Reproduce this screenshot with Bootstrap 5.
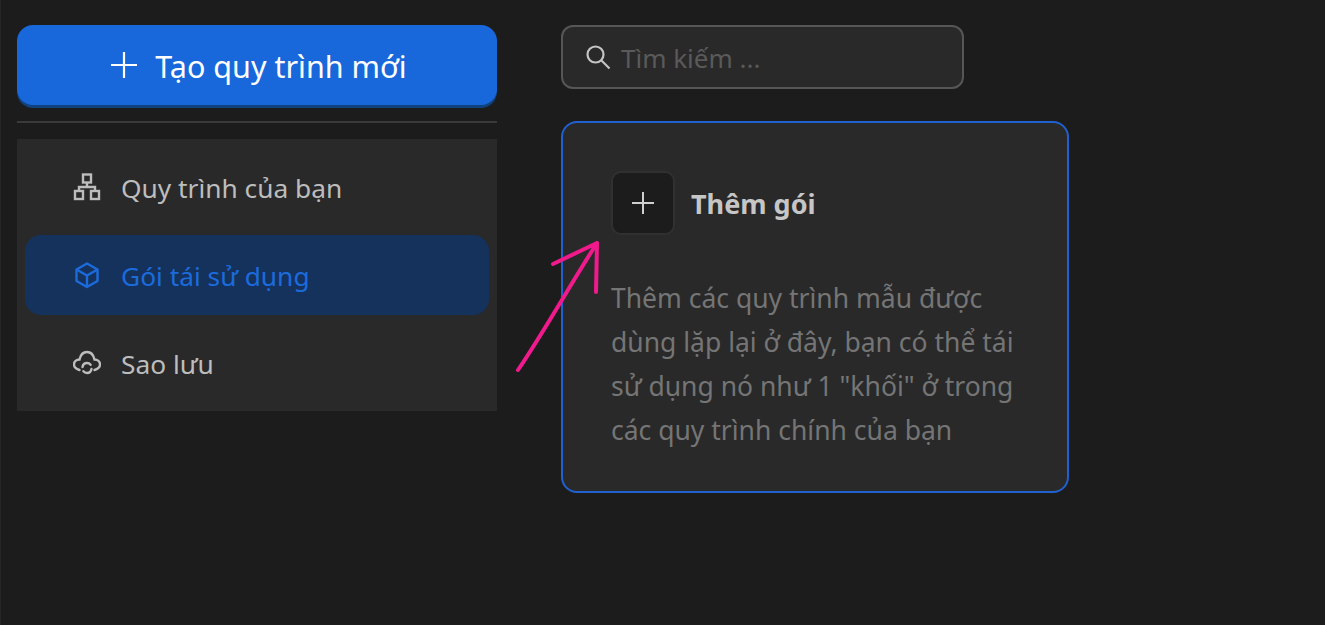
<!DOCTYPE html>
<html lang="en">
<head>
  <meta charset="UTF-8">
  <meta name="viewport" content="width=device-width, initial-scale=1">
  <title>Gói tái sử dụng</title>
  <link href="https://cdn.jsdelivr.net/npm/bootstrap@5.3.3/dist/css/bootstrap.min.css" rel="stylesheet">
  <style>
    html, body { height: 100%; }
    body { background: #1c1c1c; font-family: "Noto Sans", "Open Sans", sans-serif; overflow: hidden; position: relative; }
    .page-wrap { padding: 25px 0 0 16px; gap: 64px; border-left: 1px solid #262626; min-height: 100%; }
    .side-col { width: 480px; }
    .btn-create { height: 80px; background: #1868db; color: #fff; font-size: 30.5px; border: 0; border-radius: 16px; box-shadow: 0 3px 0 #10427f; gap: 17px; padding-left: 15px; }
    .btn-create span { padding-top: 4px; }
    .btn-create:hover { background: #1868db; color: #fff; }
    .side-line { height: 2px; background: #3a3a3a; margin: 16px 0; }
    .side-menu { background: #292929; padding: 8px; gap: 8px; }
    .side-item { height: 80px; padding-left: 48px; gap: 20px; color: #bdbdbd; font-size: 26.3px; border-radius: 16px; text-decoration: none; }
    .side-item span { padding-top: 3px; }
    .side-item:hover { color: #bdbdbd; }
    .side-item.is-active, .side-item.is-active:hover { background: #15325d; color: #1c6bdc; }
    .search-box { width: 403px; height: 64px; background: #292929; border: 2px solid #565656; border-radius: 12px; padding-left: 22px; gap: 10px; margin-bottom: 32px; }
    .search-box input { background: transparent; border: 0; outline: 0; font-size: 26px; width: 320px; color: #bdbdbd; padding: 2px 0 0; }
    .search-box input::placeholder { color: #5a5a5a; opacity: 1; }
    .pack-tile { width: 508px; height: 372px; background: #292929; border: 2px solid #2160cf; border-radius: 16px; padding: 48px; }
    .pack-add { width: 64px; height: 64px; background: #1c1c1c; border: 2px solid #303030; border-radius: 10px; }
    .pack-title { font-size: 27px; font-weight: 700; color: #c6c6c6; margin-left: 16px; padding-top: 3px; }
    .pack-text { color: #757575; font-size: 26.5px; line-height: 44px; margin: 41px 0 0; }
    .hint-arrow { position: absolute; left: 510px; top: 235px; width: 100px; height: 145px; }
  </style>
</head>
<body>
  <div class="d-flex page-wrap">
    <!-- left column -->
    <div class="side-col">
      <button class="btn btn-create w-100 d-flex align-items-center justify-content-center" type="button">
        <svg width="28" height="28" viewBox="0 0 28 28" fill="none" stroke="#fff" stroke-width="2.2"><path d="M14 1v26M1 14h26"/></svg>
        <span>Tạo quy trình mới</span>
      </button>
      <div class="side-line"></div>
      <nav class="side-menu d-flex flex-column">
        <a class="side-item d-flex align-items-center" href="#">
          <svg width="28" height="28" viewBox="0 0 28 28" fill="none" stroke="currentColor" stroke-width="2.4"><rect x="10" y="1.5" width="8" height="8"/><rect x="2" y="18" width="8" height="8"/><rect x="18" y="18" width="8" height="8"/><path d="M14 9.5v4.5M6 18v-4h16v4"/></svg>
          <span>Quy trình của bạn</span>
        </a>
        <a class="side-item is-active d-flex align-items-center" href="#">
          <svg width="28" height="28" viewBox="0 0 28 28" fill="none" stroke="currentColor" stroke-width="2.4" stroke-linejoin="round"><path d="M14 2.5l10.5 6v11.500l-10.500 6-10.500-6v-11.500z"/><path d="M3.500 8.500l10.500 6 10.500-6M14 14.500v11.500"/></svg>
          <span>Gói tái sử dụng</span>
        </a>
        <a class="side-item d-flex align-items-center" href="#">
          <svg width="28" height="28" viewBox="0 0 28 28" fill="none" stroke="currentColor" stroke-width="2.4" stroke-linecap="round"><path d="M6.500 21C3 20 1 18 1 15.500 1 12.500 3.500 10.500 6.500 10.500 7.500 6 10.500 3 14 3s6.500 3 7.500 7.500c3 0 5.500 2 5.500 5 0 2.500-2 4.500-5.500 5.500"/><path d="M9.500 18c.4-2.300 2.200-4 4.500-4 1.400 0 2.700.6 3.600 1.700M18.500 20c-.4 2.300-2.200 4-4.500 4-1.400 0-2.700-.6-3.600-1.700"/></svg>
          <span>Sao lưu</span>
        </a>
      </nav>
    </div>

    <!-- right column -->
    <div>
      <div class="search-box d-flex align-items-center">
        <svg width="26" height="26" viewBox="0 0 26 26" fill="none" stroke="#c4c4c4" stroke-width="2.200"><circle cx="10.500" cy="10.500" r="8"/><path d="M16.500 16.500l8 8"/></svg>
        <input type="text" placeholder="Tìm kiếm ...">
      </div>
      <div class="pack-tile">
        <div class="d-flex align-items-center">
          <div class="pack-add d-flex align-items-center justify-content-center">
            <svg width="24" height="24" viewBox="0 0 24 24" fill="none" stroke="#cfcfcf" stroke-width="2"><path d="M12 1v22M1 12h22"/></svg>
          </div>
          <span class="pack-title">Thêm gói</span>
        </div>
        <p class="pack-text">Thêm các quy trình mẫu được dùng lặp lại ở đây, bạn có thể tái sử dụng nó như 1 "khối" ở trong các quy trình chính của bạn</p>
      </div>
    </div>
  </div>

  <svg class="hint-arrow" viewBox="0 0 100 145" fill="none" stroke="#f01a8c" stroke-width="4" stroke-linecap="round" stroke-linejoin="round"><path d="M8 135C35 95 60 50 87 8M43 29L87 8L86 57"/></svg>

  <script src="https://cdn.jsdelivr.net/npm/bootstrap@5.3.3/dist/js/bootstrap.bundle.min.js"></script>
</body>
</html>
